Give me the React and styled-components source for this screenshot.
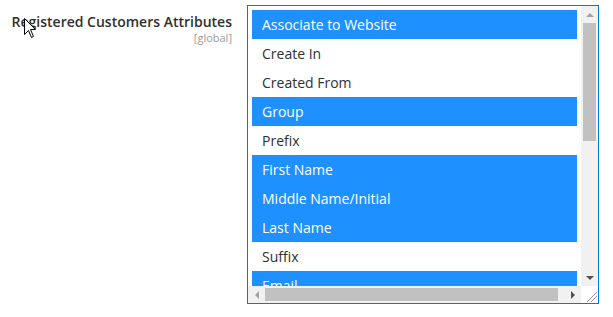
import React from "react";
import styled, { createGlobalStyle } from "styled-components";

const Global = createGlobalStyle`
  html, body { margin: 0; padding: 0; background: #ffffff; }
  body { font-family: "Open Sans", "Liberation Sans", sans-serif; }
`;

const Page = styled.div`
  position: relative;
  width: 613px;
  height: 317px;
  display: flex;
  align-items: flex-start;
  padding-top: 5px;
  box-sizing: border-box;
`;

const LabelCol = styled.div`
  width: 232px;
  padding-top: 7px;
  margin-right: 15px;
  display: flex;
  flex-direction: column;
  align-items: flex-end;
`;

const Label = styled.span`
  font-size: 14px;
  font-weight: 600;
  color: #303030;
  line-height: 19px;
  white-space: nowrap;
`;

const Scope = styled.span`
  font-size: 11px;
  color: #999999;
  line-height: 13px;
`;

const Box = styled.div`
  width: 352px;
  height: 299px;
  box-sizing: border-box;
  border: 1px solid #007bdb;
  display: grid;
  grid-template-columns: 1fr 17px;
  grid-template-rows: 1fr 17px;
  background: #fff;
`;

const Viewport = styled.div`
  overflow: hidden;
  padding: 4px 4px 0 4px;
`;

const List = styled.ul`
  list-style: none;
  margin: 0;
  padding: 0;
`;

const Option = styled.li`
  height: 29px;
  line-height: 29px;
  padding-left: 10px;
  font-size: 14px;
  white-space: nowrap;
  color: ${(p) => (p.$selected ? "#ffffff" : "#303030")};
  background: ${(p) => (p.$selected ? "#1e90ff" : "transparent")};
`;

const VBar = styled.div`
  background: #f1f1f1;
  display: grid;
  grid-template-rows: 17px 118px 1fr 17px;
`;

const HBar = styled.div`
  background: #f1f1f1;
  display: grid;
  grid-template-columns: 17px 293px 1fr 17px;
`;

const Arrow = styled.div`
  display: flex;
  align-items: center;
  justify-content: center;
  color: ${(p) => (p.$disabled ? "#a3a3a3" : "#505050")};
`;

const Thumb = styled.div`
  background: #c1c1c1;
  margin: ${(p) => (p.$vertical ? "0 2px" : "2px 0")};
`;

const Corner = styled.div`
  background: #ffffff;
  display: flex;
  align-items: flex-end;
  justify-content: flex-end;
`;

const Cursor = styled.svg`
  position: absolute;
  left: 24px;
  top: 18px;
`;

const options = [
  ["Associate to Website", true],
  ["Create In", false],
  ["Created From", false],
  ["Group", true],
  ["Prefix", false],
  ["First Name", true],
  ["Middle Name/Initial", true],
  ["Last Name", true],
  ["Suffix", false],
  ["Email", true],
];

const Tri = ({ dir }) => {
  const pts = {
    up: "0,4 4,0 8,4",
    down: "0,0 8,0 4,4",
    left: "4,0 4,8 0,4",
    right: "0,0 4,4 0,8",
  }[dir];
  const vertical = dir === "up" || dir === "down";
  return (
    <svg width={vertical ? 8 : 4} height={vertical ? 4 : 8} viewBox={vertical ? "0 0 8 4" : "0 0 4 8"}>
      <polygon points={pts} fill="currentColor" />
    </svg>
  );
};

export default function App() {
  return (
    <>
      <Global />
      <Page>
        <LabelCol>
          <Label>Registered Customers Attributes</Label>
          <Scope>[global]</Scope>
        </LabelCol>
        <Box>
          <Viewport>
            <List>
              {options.map(([name, sel]) => (
                <Option key={name} $selected={sel}>
                  {name}
                </Option>
              ))}
            </List>
          </Viewport>
          <VBar>
            <Arrow $disabled>
              <Tri dir="up" />
            </Arrow>
            <Thumb $vertical />
            <div />
            <Arrow>
              <Tri dir="down" />
            </Arrow>
          </VBar>
          <HBar>
            <Arrow $disabled>
              <Tri dir="left" />
            </Arrow>
            <Thumb />
            <div />
            <Arrow>
              <Tri dir="right" />
            </Arrow>
          </HBar>
          <Corner>
            <svg width="14" height="14" viewBox="0 0 14 14">
              <line x1="3" y1="13" x2="13" y2="3" stroke="#9a9a9a" strokeWidth="1" />
              <line x1="7" y1="13" x2="13" y2="7" stroke="#9a9a9a" strokeWidth="1" />
            </svg>
          </Corner>
        </Box>
        <Cursor width="13" height="21" viewBox="0 0 13 21">
          <path
            d="M0.5 0.5 L0.5 16.5 L4.5 12.5 L7.5 19.5 L9.5 18.5 L6.5 11.5 L11.5 11.5 Z"
            fill="#ffffff"
            stroke="#000000"
            strokeWidth="1"
            strokeLinejoin="miter"
          />
        </Cursor>
      </Page>
    </>
  );
}
